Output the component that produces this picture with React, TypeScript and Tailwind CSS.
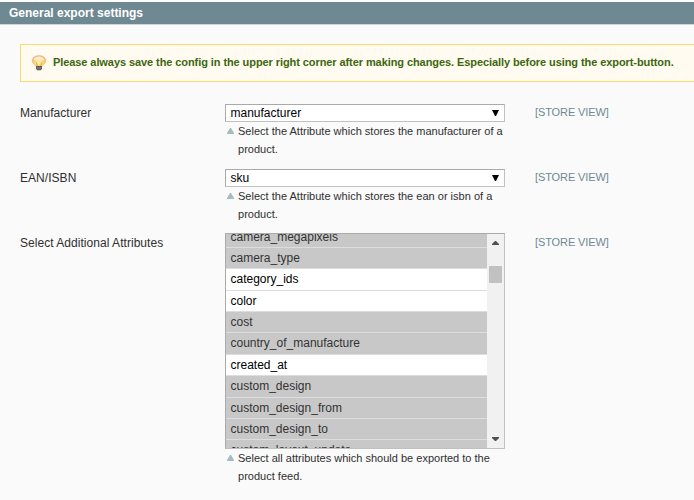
type Field = { label: string; value: string; note: [string, string] };

const fields: Field[] = [
  {
    label: 'Manufacturer',
    value: 'manufacturer',
    note: ['Select the Attribute which stores the manufacturer of a', 'product.'],
  },
  {
    label: 'EAN/ISBN',
    value: 'sku',
    note: ['Select the Attribute which stores the ean or isbn of a', 'product.'],
  },
];

const attributes = [
  { name: 'camera_megapixels', on: true, h: 'h-[22px] pt-px' },
  { name: 'camera_type', on: true, h: 'h-[21px]' },
  { name: 'category_ids', on: false, h: 'h-[22px]' },
  { name: 'color', on: false, h: 'h-[21px]' },
  { name: 'cost', on: true, h: 'h-[21px]' },
  { name: 'country_of_manufacture', on: true, h: 'h-[22px]' },
  { name: 'created_at', on: false, h: 'h-[21px]' },
  { name: 'custom_design', on: true, h: 'h-[22px]' },
  { name: 'custom_design_from', on: true, h: 'h-[21px]' },
  { name: 'custom_design_to', on: true, h: 'h-[21px]' },
  { name: 'custom_layout_update', on: true, h: 'h-[22px]' },
];

function Bulb() {
  return (
    <svg width="16" height="16" viewBox="0 0 16 16" className="shrink-0">
      <defs>
        <radialGradient id="glass" cx="0.5" cy="0.65" r="0.6">
          <stop offset="0" stopColor="#fff6a8" />
          <stop offset="0.5" stopColor="#fbd978" />
          <stop offset="1" stopColor="#f0bd78" />
        </radialGradient>
      </defs>
      <path d="M8 .7C3.800.7 1.300 2.800 1.300 5.600c0 2.400 1.800 3.500 2.900 4.800.5.700.7 1.200 1.200 1.200h5.200c.5 0 .7-.5 1.200-1.200 1.100-1.300 2.900-2.400 2.900-4.800C14.700 2.800 12.200.7 8 .7Z" fill="url(#glass)" stroke="#e6b48a" strokeWidth=".8" />
      <path d="M2.800 5C3.500 2.300 6 1.500 8 1.500s4.500.8 5.200 3.500C10 6 6 6 2.800 5Z" fill="#fdebcf" />
      <path d="M5.200 7.200 6.500 11M10.800 7.200 9.500 11" stroke="#e0ae2e" strokeWidth=".9" fill="none" />
      <path d="M5 11h6v2.700L9.800 15.300H6.200L5 13.700Z" fill="#55534f" />
      <path d="M5.500 12.300h5M5.700 13.800h4.600" stroke="#a09d9a" strokeWidth=".6" />
    </svg>
  );
}

function Note({ lines }: { lines: [string, string] }) {
  return (
    <div className="flex h-9 pl-[2px] text-[11px] leading-[18px] tracking-[0.01px] text-[#2f2f2f]">
      <svg width="7" height="6" viewBox="0 0 7 6" className="mt-[6px] mr-1 shrink-0">
        <path d="M3 0h1L7 5v1H0V5Z" fill="#a9bac2" />
      </svg>
      <p className="whitespace-nowrap">
        {lines[0]}
        <br />
        {lines[1]}
      </p>
    </div>
  );
}

function Scope() {
  return <span className="ml-[30px] text-[11px] leading-[17px] tracking-[-0.1px] text-[#6f8992]">[STORE VIEW]</span>;
}

function Label({ text }: { text: string }) {
  return <span className="w-[205px] shrink-0 text-[12px] leading-[18px] tracking-[0.04px] text-[#2f2f2f]">{text}</span>;
}

export default function App() {
  return (
    <main className="h-[500px] w-[694px] overflow-hidden bg-[#fafafa] font-['Liberation_Sans',Arial,sans-serif]">
      <header className="h-[25px] border-t-2 border-b border-t-white border-b-[#d6d3da] bg-[#6f8992] pl-[9px] text-[12px] leading-[22px] font-bold text-white">
        General export settings
      </header>
      <section className="mt-[19px] ml-5">
        <div className="flex h-[38px] items-center gap-[6px] border-y border-l border-[#fcd96e] bg-[#fffbf0] pl-[10px] text-[11px] font-bold whitespace-nowrap text-[#3d6611]">
          <Bulb />
          <span className="pb-[2px] tracking-[-0.08px]">
            Please always save the config in the upper right corner after making changes. Especially before using the export-button.
          </span>
        </div>
        <div className="mt-[22px] flex flex-col">
          {fields.map((f) => (
            <div key={f.label} className="flex h-[65px] items-start">
              <Label text={f.label} />
              <div className="w-[280px]">
                <div className="flex h-[18px] items-center justify-between border border-[#aaa] border-r-[#c0c0c0] border-b-[#c0c0c0] bg-white pr-[5px] pl-[4.5px] text-[12px] text-black">
                  <span>{f.value}</span>
                  <svg width="7" height="6" viewBox="0 0 7 6">
                    <path d="M0 0h7L4 6H3Z" fill="#000" />
                  </svg>
                </div>
                <Note lines={f.note} />
              </div>
              <Scope />
            </div>
          ))}
          <div className="flex items-start">
            <Label text="Select Additional Attributes" />
            <div className="-mt-px w-[280px]">
              <div className="flex h-[216px] overflow-hidden border border-[#aaa] border-r-[#c0c0c0] border-b-[#c0c0c0] bg-white">
                <div className="-mt-[8px] h-[236px] flex-1 text-[12px] leading-[21px]">
                  {attributes.map((a) => (
                    <div
                      key={a.name}
                      className={`${a.h} border-b border-[#ddd] pl-[4.5px] ${a.on ? 'bg-[#c8c8c8] text-[#333]' : 'bg-white text-black'}`}
                    >
                      {a.name}
                    </div>
                  ))}
                </div>
                <div className="flex w-[17px] flex-col items-center justify-between bg-[#f1f1f1]">
                  <div className="flex flex-col items-center">
                    <svg width="7" height="4" viewBox="0 0 7 4" className="mt-[7px]">
                      <path d="M3 0h1L7 3v1H0V3Z" fill="#505050" />
                    </svg>
                    <div className="mt-[21px] h-[17px] w-[13px] bg-[#c1c1c1]" />
                  </div>
                  <svg width="7" height="4" viewBox="0 0 7 4" className="mb-[7px]">
                    <path d="M0 0h7v1L4 4H3L0 1Z" fill="#505050" />
                  </svg>
                </div>
              </div>
              <Note lines={['Select all attributes which should be exported to the', 'product feed.']} />
            </div>
            <Scope />
          </div>
        </div>
      </section>
    </main>
  );
}
